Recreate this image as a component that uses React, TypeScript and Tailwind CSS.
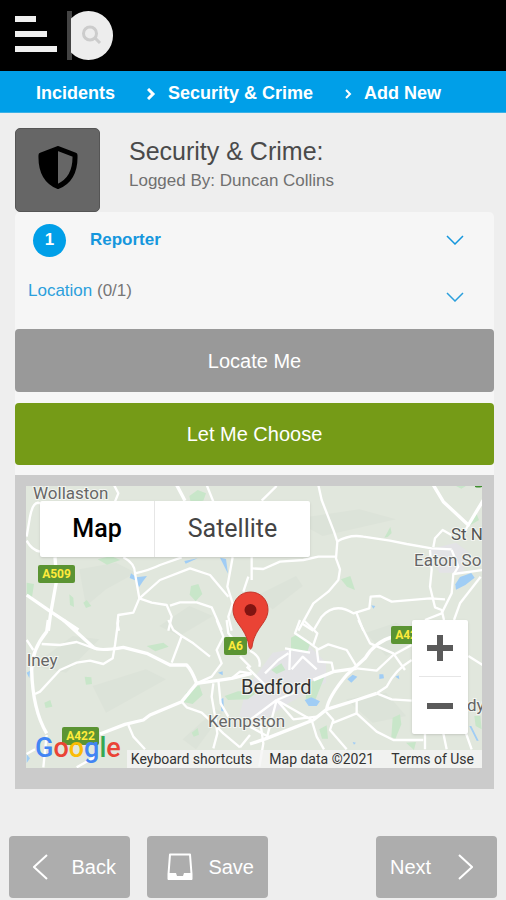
import { ReactNode } from 'react'

const northWest = {
  major: ['M135 262 L140 330 L122 430 L115 482', 'M50 375 L122 425 L205 480'],
  minor: [
    'M90 100 Q70 90 60 140 L50 200 M50 212 Q65 240 90 245',
    'M312 45 L325 70 L315 95',
    'M590 45 L610 95',
    'M340 262 Q375 280 375 310 L388 385 L450 330 L540 295 L600 315 L655 380',
    'M375 310 Q420 300 450 285 L515 262',
    'M388 385 L370 428 L325 435 L322 460 L327 482',
    'M388 385 L425 398 L470 405 L485 440 L475 482 M480 407 L510 397 L560 397 L605 412 L635 480',
    'M668 262 L652 350 L668 400 L655 440 L665 482 M715 320 L700 365',
  ],
}

const northEast = {
  major: ['M550 45 L580 95 L655 165 L700 90'],
  minor: [
    'M205 45 L215 90 L252 185 L262 215 L258 265 L270 298 L265 330 L235 365 L190 400 L145 482',
    'M260 215 Q300 192 340 200 L420 212 L470 222 L545 235 L605 238',
    'M5 295 L40 297 L90 275 L160 270 L205 260 L255 260',
    'M80 48 L35 92 M5 262 V330',
    'M655 165 L632 205 M550 232 L555 205 L578 180 L604 195',
    'M540 240 L545 300 L540 350 L555 412 L575 420 L582 450',
    'M700 300 L610 312 L605 370 L575 430 L525 450',
    'M692 320 L630 400 L612 450',
    'M190 482 L215 440 Q255 395 310 430 L358 415 L362 380 L390 378 L425 395 L540 385 L585 388',
    'M318 425 L340 482 M155 460 L190 482 M605 240 L625 290 L612 312',
  ],
}

const southWest = {
  major: [
    'M115 0 L110 35 Q65 90 65 150 Q68 270 110 340',
    'M160 0 L250 82 Q265 95 340 82 L410 100 L480 135 L530 135 Q545 150 560 190',
    'M560 190 L515 245 L420 285 L400 300 L345 313 L270 342',
    'M560 190 L620 182 L665 175 L725 160',
    'M500 -405 L525 -358',
  ],
  minor: [
    'M95 72 L150 75 L200 66 L255 86',
    'M325 0 L315 75 L308 115 L280 132 L240 122 L200 128 L150 150 L90 215 L75 222',
    'M475 0 L490 30 L515 48 L485 128 M515 48 L550 70 L600 110',
    'M620 0 L640 50 L620 90 L635 130 L605 170 L560 190',
    'M650 0 L655 40 L672 60 M690 110 L722 142 M665 175 L690 155 L722 160',
    'M515 245 L530 262 L575 278 L610 310 L640 340 L690 382',
    'M355 315 L370 350 L405 388',
    'M625 180 L632 250 L655 290 M610 190 L605 230 L617 300 L622 340 L610 385',
    'M110 345 L100 442 M50 60 L70 90 M50 402 L75 388 M200 442 L260 408',
    'M690 382 L720 345',
  ],
}

const southEast = {
  major: [
    'M0 372 L50 355 L190 300 L230 268 L320 240 L380 220',
    'M230 268 Q235 230 290 165 L345 115 Q375 65 430 50',
    'M190 180 L250 155 L320 145',
  ],
  minor: [
    'M380 220 L410 200 Q435 150 485 120 M380 220 L425 238 L485 242',
    'M320 145 L380 152 L430 105 L485 75',
    'M325 0 L360 70 L430 100 L465 150',
    'M150 0 L135 40 L180 70 L205 88 L235 73 L290 90 L320 140',
    'M200 85 L205 125 L245 128 L250 152 M160 0 L202 40 L190 75',
    'M120 90 L118 150 M45 160 L85 120 L115 100 M105 85 L180 98',
    'M125 148 L158 110 L200 148 M0 92 Q35 110 28 140 M-10 140 L45 195',
    'M80 240 L0 300 M80 240 L50 355 M80 240 L130 298 L200 290 M80 240 L185 300 M80 240 L140 215',
    'M320 240 L320 280 L380 335 L430 360 L520 360',
    'M228 275 L250 300 L240 330 L290 388 M185 300 L200 350 L222 388 M245 310 L320 280',
    'M525 340 V388 M580 340 L590 388 M648 340 L665 388 M655 108 L698 135',
    'M30 300 L40 370 L28 440 M0 320 L55 350',
  ],
}

const parks = [
  'M490 30 l25 -18 25 10 -8 22 -38 4z',
  'M215 220 l40 -10 28 12 -40 14z',
  'M495 300 l22 -6 12 30 -20 22 -18 -20z',
  'M130 325 l12 10 2 28 -12 -6z M172 350 l10 -8 14 18 -16 6z',
  'M2 290 l22 4 -6 40 -16 -6z',
  'M1075 155 l18 -32 4 18 -12 12z',
  'M945 280 l28 -10 14 42 -24 -10z',
  'M1325 110 l26 -28 8 20 -30 18z M1290 0 h30 l-14 8z',
  'M795 455 l20 -10 38 25 -8 25 -50 0z',
  'M362 480 l50 -10 16 12 -40 14z',
  'M480 620 l40 -22 10 28 -30 28 -28 -6z M596 630 l40 -14 60 0 -30 24 -60 2z',
  'M736 552 l30 -20 12 20 -26 12z M845 590 l50 -16 -28 70 -28 -6z',
  'M176 572 l20 2 2 20 -18 2z M55 650 l18 -8 6 20 -20 4z',
  'M1100 695 l22 -10 4 30 -18 44 -12 -6z M1140 770 l30 -2 -6 24z',
  'M1345 690 l18 0 4 40 -18 -10z M880 730 l22 -12 4 40 -18 0z',
  'M497 740 l18 -14 4 20 -16 6z',
]

const lakes = [
  'M315 262 l16 12 32 -4 -12 16 -12 18 -8 -20 -20 -8z',
  'M475 225 l40 -8 -36 16z M582 215 l18 4 6 44 -12 -24z',
  'M1288 295 l14 -22 34 -12 10 14 -28 22 -28 14z',
  'M836 642 l20 -8 26 12 -10 14 -24 0z M964 580 l16 -14 14 6 -18 18z',
  'M1060 565 l12 0 2 12 -14 2z M1108 572 l10 -4 2 12z M1036 358 l12 2 -6 8z',
  'M576 560 l14 -4 0 12z M584 640 l8 -4 2 40 -8 0z',
  'M1330 720 l6 0 22 44 -6 0z M980 768 l10 2 -6 6z M2 560 l10 -6 -2 22z M2 805 l10 12 -10 14z',
]

const hills = [
  'M160 250 l110 -20 60 30 -90 50 -60 50z',
  'M20 540 l120 -90 80 10 -100 100z',
  'M200 600 l160 -50 60 30 -180 100z',
  'M470 760 l100 -90 20 10 -80 110z',
  'M800 100 l200 -30 110 30 -220 50z',
  'M690 330 l120 -60 20 30 -90 70z',
  'M1020 440 l90 -30 90 40 -120 60z',
  'M400 420 l90 -60 70 30 -100 60z',
  'M960 640 l120 -20 60 70 -100 20z',
]

const labels = [
  { text: 'Wollaston', x: 7, y: 13, size: 'text-[17px]', fill: '#666' },
  { text: 'St N', x: 425, y: 54, size: 'text-[17px]', fill: '#555' },
  { text: 'Eaton So', x: 388, y: 80, size: 'text-[17px]', fill: '#666' },
  { text: 'lney', x: 1, y: 180, size: 'text-[17px]', fill: '#666' },
  { text: 'Bedford', x: 215, y: 208, size: 'text-[20px]', fill: '#333' },
  { text: 'Kempston', x: 182, y: 241, size: 'text-[17px]', fill: '#666' },
  { text: 'dy', x: 441, y: 225, size: 'text-[17px]', fill: '#666' },
]

const shields = [
  { text: 'A509', x: 12, y: 79, width: 37 },
  { text: 'A6', x: 198, y: 151, width: 23 },
  { text: 'A422', x: 36, y: 241, width: 37 },
  { text: 'A421', x: 365, y: 140, width: 37 },
]

function Roads({ roads, x, y }: { roads: { major: string[]; minor: string[] }; x: number; y: number }) {
  return (
    <g transform={`translate(${x} ${y})`} fill="none" stroke="#fff" strokeLinejoin="round">
      {roads.minor.map((d) => (
        <path key={d} d={d} strokeWidth="7" />
      ))}
      {roads.major.map((d) => (
        <path key={d} d={d} strokeWidth="10" />
      ))}
    </g>
  )
}

function MapCanvas() {
  return (
    <svg
      viewBox="0 0 456 282"
      preserveAspectRatio="xMidYMid slice"
      className="block w-full h-full font-['Roboto',sans-serif]"
      role="img"
      aria-label="Map of Bedford"
    >
      <rect width="456" height="282" fill="#e1e7dd" />
      {/* Terrain and roads are drawn on a grid three times finer than the labels */}
      <g transform="scale(0.33333)">
        <g fill="#d8dfd5" opacity="0.45">
          {hills.map((d) => (
            <path key={d} d={d} />
          ))}
        </g>
        <path d="M740 500 l110 -20 50 50 0 60 -110 60 -90 60 -60 -20 20 -80z" fill="#e3e3e6" />
        <path d="M1210 190 l80 -20 40 30 -20 60 -70 0z" fill="#e3e3e6" />
        <g fill="#c8e6c9">
          {parks.map((d) => (
            <path key={d} d={d} />
          ))}
        </g>
        <g fill="#a0cdf5">
          {lakes.map((d) => (
            <path key={d} d={d} />
          ))}
        </g>
        <Roads roads={northWest} x={-48} y={-48} />
        <Roads roads={northEast} x={672} y={-48} />
        <Roads roads={southWest} x={-48} y={402} />
        <Roads roads={southEast} x={672} y={402} />
      </g>
      <path d="M449 0h7v1q-4 1 -7 0z" fill="#3f8f2f" />
      {shields.map((s) => (
        <g key={s.text}>
          <rect x={s.x} y={s.y} width={s.width} height="18" rx="2" fill="#5b9433" />
          <text x={s.x + s.width / 2} y={s.y + 13} textAnchor="middle" fill="#ffeb3b" className="text-[12px] font-bold">
            {s.text}
          </text>
        </g>
      ))}
      {labels.map((l) => (
        <text
          key={l.text}
          x={l.x}
          y={l.y}
          fill={l.fill}
          stroke="#f4f6f2"
          strokeWidth="2"
          paintOrder="stroke"
          className={l.size}
        >
          {l.text}
        </text>
      ))}
      {/* Pin */}
      <path
        d="M224.500 106 C214.500 106 207 114 207 123.500 C207 130 210 134.500 214 140 C219 147 222 153 223 161 Q224.500 165 226 161 C227 153 230 147 235 140 C239 134.500 242 130 242 123.500 C242 114 234.500 106 224.500 106Z"
        fill="#ea4335"
        stroke="#c5362b"
        strokeWidth="1"
      />
      <circle cx="224.500" cy="124" r="6" fill="#811411" />
    </svg>
  )
}

function Chevron({ direction, className }: { direction: 'left' | 'right' | 'down'; className: string }) {
  const paths = { left: 'M14 1 L1 13 L14 25', right: 'M1 1 L14 13 L1 25', down: 'M1 1 L9 9 L17 1' }
  return (
    <svg
      viewBox={direction === 'down' ? '0 0 18 10' : '0 0 15 26'}
      className={className}
      fill="none"
      stroke="currentColor"
      strokeWidth={direction === 'down' ? 1.5 : 2}
      aria-hidden="true"
    >
      <path d={paths[direction]} />
    </svg>
  )
}

function FooterButton({ forward = false, children }: { forward?: boolean; children: ReactNode }) {
  return (
    <button
      type="button"
      className={`flex items-center justify-between w-[121px] h-[62px] rounded-[4px] bg-[#adadad] text-white text-[20px] ${
        forward ? 'pl-[14px] pr-6' : 'pl-6 pr-[14px]'
      }`}
    >
      {children}
    </button>
  )
}

export default function App() {
  return (
    <div className="min-h-screen bg-[#eee] font-['Liberation_Sans',Arial,sans-serif]">
      {/* Top bar */}
      <header className="flex items-center gap-[10px] h-[71px] pl-[15px] bg-black">
        <button type="button" aria-label="Menu" className="flex flex-col gap-[9px] w-[42px] pb-1">
          <span className="w-[21px] h-[6px] bg-[#f0f0f0]" />
          <span className="w-8 h-[6px] bg-[#f0f0f0]" />
          <span className="w-full h-[6px] bg-[#f0f0f0]" />
        </button>
        <button type="button" aria-label="Search" className="w-[47px] h-[49px]">
          <svg viewBox="0 0 47 49" className="block w-full h-full">
            <rect width="5" height="49" fill="#444" />
            <path d="M4 7.400 A24.500 24.500 0 1 1 4 41.600 Z" fill="#ededed" />
            <circle cx="23" cy="22.500" r="6.500" fill="none" stroke="#ccc" strokeWidth="3" />
            <path d="M28 27 L33 32" stroke="#ccc" strokeWidth="3" />
          </svg>
        </button>
      </header>

      {/* Breadcrumb */}
      <nav aria-label="Breadcrumb" className="flex items-center h-[42px] pl-9 pt-1 bg-[#009fe8] border-b border-[#3cb1e6] text-white text-[18px] font-bold whitespace-nowrap">
        <a href="#incidents">Incidents</a>
        <svg viewBox="0 0 9 12" className="w-[9px] h-3 ml-8 mr-3" fill="none" stroke="currentColor" strokeWidth="3" aria-hidden="true">
          <path d="M1 1 L6 6 L1 11" />
        </svg>
        <a href="#security">Security &amp; Crime</a>
        <svg viewBox="0 0 7 10" className="w-[7px] h-[10px] ml-8 mr-3" fill="none" stroke="currentColor" strokeWidth="2" aria-hidden="true">
          <path d="M1 1 L5 5 L1 9" />
        </svg>
        <a href="#new">Add New</a>
      </nav>

      <main className="px-[15px] pt-[15px] pr-3">
        {/* Title */}
        <div className="flex items-start gap-[29px]">
          <div className="flex items-center justify-center w-[85px] h-[84px] pb-[6px] rounded-[5px] bg-[#666] border border-[#555]">
            <svg viewBox="0 0 40 43" className="w-10 h-[43px]" aria-hidden="true">
              <path d="M20 2.500 L37 9 C37.500 23 33 35 20 40.500 C7 35 2.500 23 3 9 Z" fill="none" stroke="#000" strokeWidth="5" strokeLinejoin="round" />
              <path d="M20 2 L3 9 C3 23 7 35 20 41 Z" fill="#000" />
            </svg>
          </div>
          <div className="pt-2">
            <h1 className="text-[25px] leading-[30px] text-[#4a4a4a]">Security &amp; Crime:</h1>
            <p className="text-[17px] leading-[30px] text-[#707070]">Logged By: Duncan Collins</p>
          </div>
        </div>

        {/* Sections */}
        <div className="bg-[#f6f6f6] rounded-t-[5px]">
          <button type="button" className="flex items-center w-full h-[56px] pl-[18px] pr-[30px] text-left text-[17px] font-bold text-[#1597dd]">
            <span className="flex items-center justify-center w-[33px] h-[33px] mr-6 rounded-full bg-[#009fe8] text-white">1</span>
            <span>Reporter</span>
            <Chevron direction="down" className="w-[18px] h-[10px] ml-auto" />
          </button>
          <button type="button" className="flex items-center justify-between w-full h-[61px] pl-[13px] pr-[30px] pb-4 text-left text-[17px] text-[#2b9fdc]">
            <span>
              Location <span className="text-[#777]">(0/1)</span>
            </span>
            <Chevron direction="down" className="w-[18px] h-[10px] mt-3" />
          </button>

          <div className="flex flex-col gap-[11px] pb-[10px] text-[20px] text-white">
            <button type="button" className="h-[63px] rounded-[4px] bg-[#999]">Locate Me</button>
            <button type="button" className="h-[62px] rounded-[4px] bg-[#759b17]">Let Me Choose</button>
          </div>
        </div>

        {/* Map */}
        <section aria-label="Location map" className="p-[11px] pr-3 pb-[21px] bg-[#cbcbcb] font-['Roboto',sans-serif]">
          <div className="relative h-[282px] overflow-hidden">
            <MapCanvas />

            <div className="absolute top-[15px] left-[14px] flex h-[56px] rounded-[2px] bg-white shadow text-[25px]">
              <button type="button" className="w-[115px] border-r border-[#e6e6e6] font-medium text-black">Map</button>
              <button type="button" className="w-[155px] text-[#444]">Satellite</button>
            </div>

            <div className="absolute right-[14px] bottom-[34px] flex flex-col w-[56px] px-[7px] rounded-[2px] bg-white shadow">
              <button type="button" aria-label="Zoom in" className="flex items-center justify-center h-[57px] border-b border-[#e6e6e6]">
                <svg viewBox="0 0 26 26" className="w-[26px] h-[26px]" aria-hidden="true">
                  <path d="M0 13 H26 M13 0 V26" stroke="#5a5a5a" strokeWidth="6" />
                </svg>
              </button>
              <button type="button" aria-label="Zoom out" className="flex items-center justify-center h-[57px]">
                <svg viewBox="0 0 26 6" className="w-[26px] h-[6px]" aria-hidden="true">
                  <path d="M0 3 H26" stroke="#5a5a5a" strokeWidth="6" />
                </svg>
              </button>
            </div>

            <a href="#google" className="absolute left-[9px] bottom-1 text-[27px] leading-[32px] text-[#4285f4] font-medium">
              G<span className="text-[#ea4335]">o</span><span className="text-[#fbbc05]">o</span>g<span className="text-[#34a853]">l</span><span className="text-[#ea4335]">e</span>
            </a>

            <div className="absolute right-0 bottom-0 flex gap-[17px] pl-1 pr-2 bg-[#f5f5f5]/80 text-[14px] leading-[18px] text-[#333] whitespace-nowrap">
              <button type="button">Keyboard shortcuts</button>
              <span>Map data ©2021</span>
              <a href="#terms">Terms of Use</a>
            </div>
          </div>
        </section>
      </main>

      {/* Actions */}
      <footer className="flex gap-[17px] pt-[47px] px-[9px]">
        <FooterButton>
          <Chevron direction="left" className="w-[15px] h-[26px]" />
          Back
        </FooterButton>
        <FooterButton>
          <svg viewBox="0 0 26 28" className="w-[26px] h-7 -ml-1" fill="none" stroke="currentColor" aria-hidden="true">
            <path d="M3 1.500 H23 L24.500 21 V26 H1.500 V21 Z" strokeWidth="2" strokeLinejoin="round" />
            <path d="M1 20 H9 L10 23 H16 L17 20 H25 V27 H1 Z" fill="currentColor" stroke="none" />
          </svg>
          Save
        </FooterButton>
        <div className="ml-auto">
          <FooterButton forward>
            Next
            <Chevron direction="right" className="w-[15px] h-[26px]" />
          </FooterButton>
        </div>
      </footer>
    </div>
  )
}
